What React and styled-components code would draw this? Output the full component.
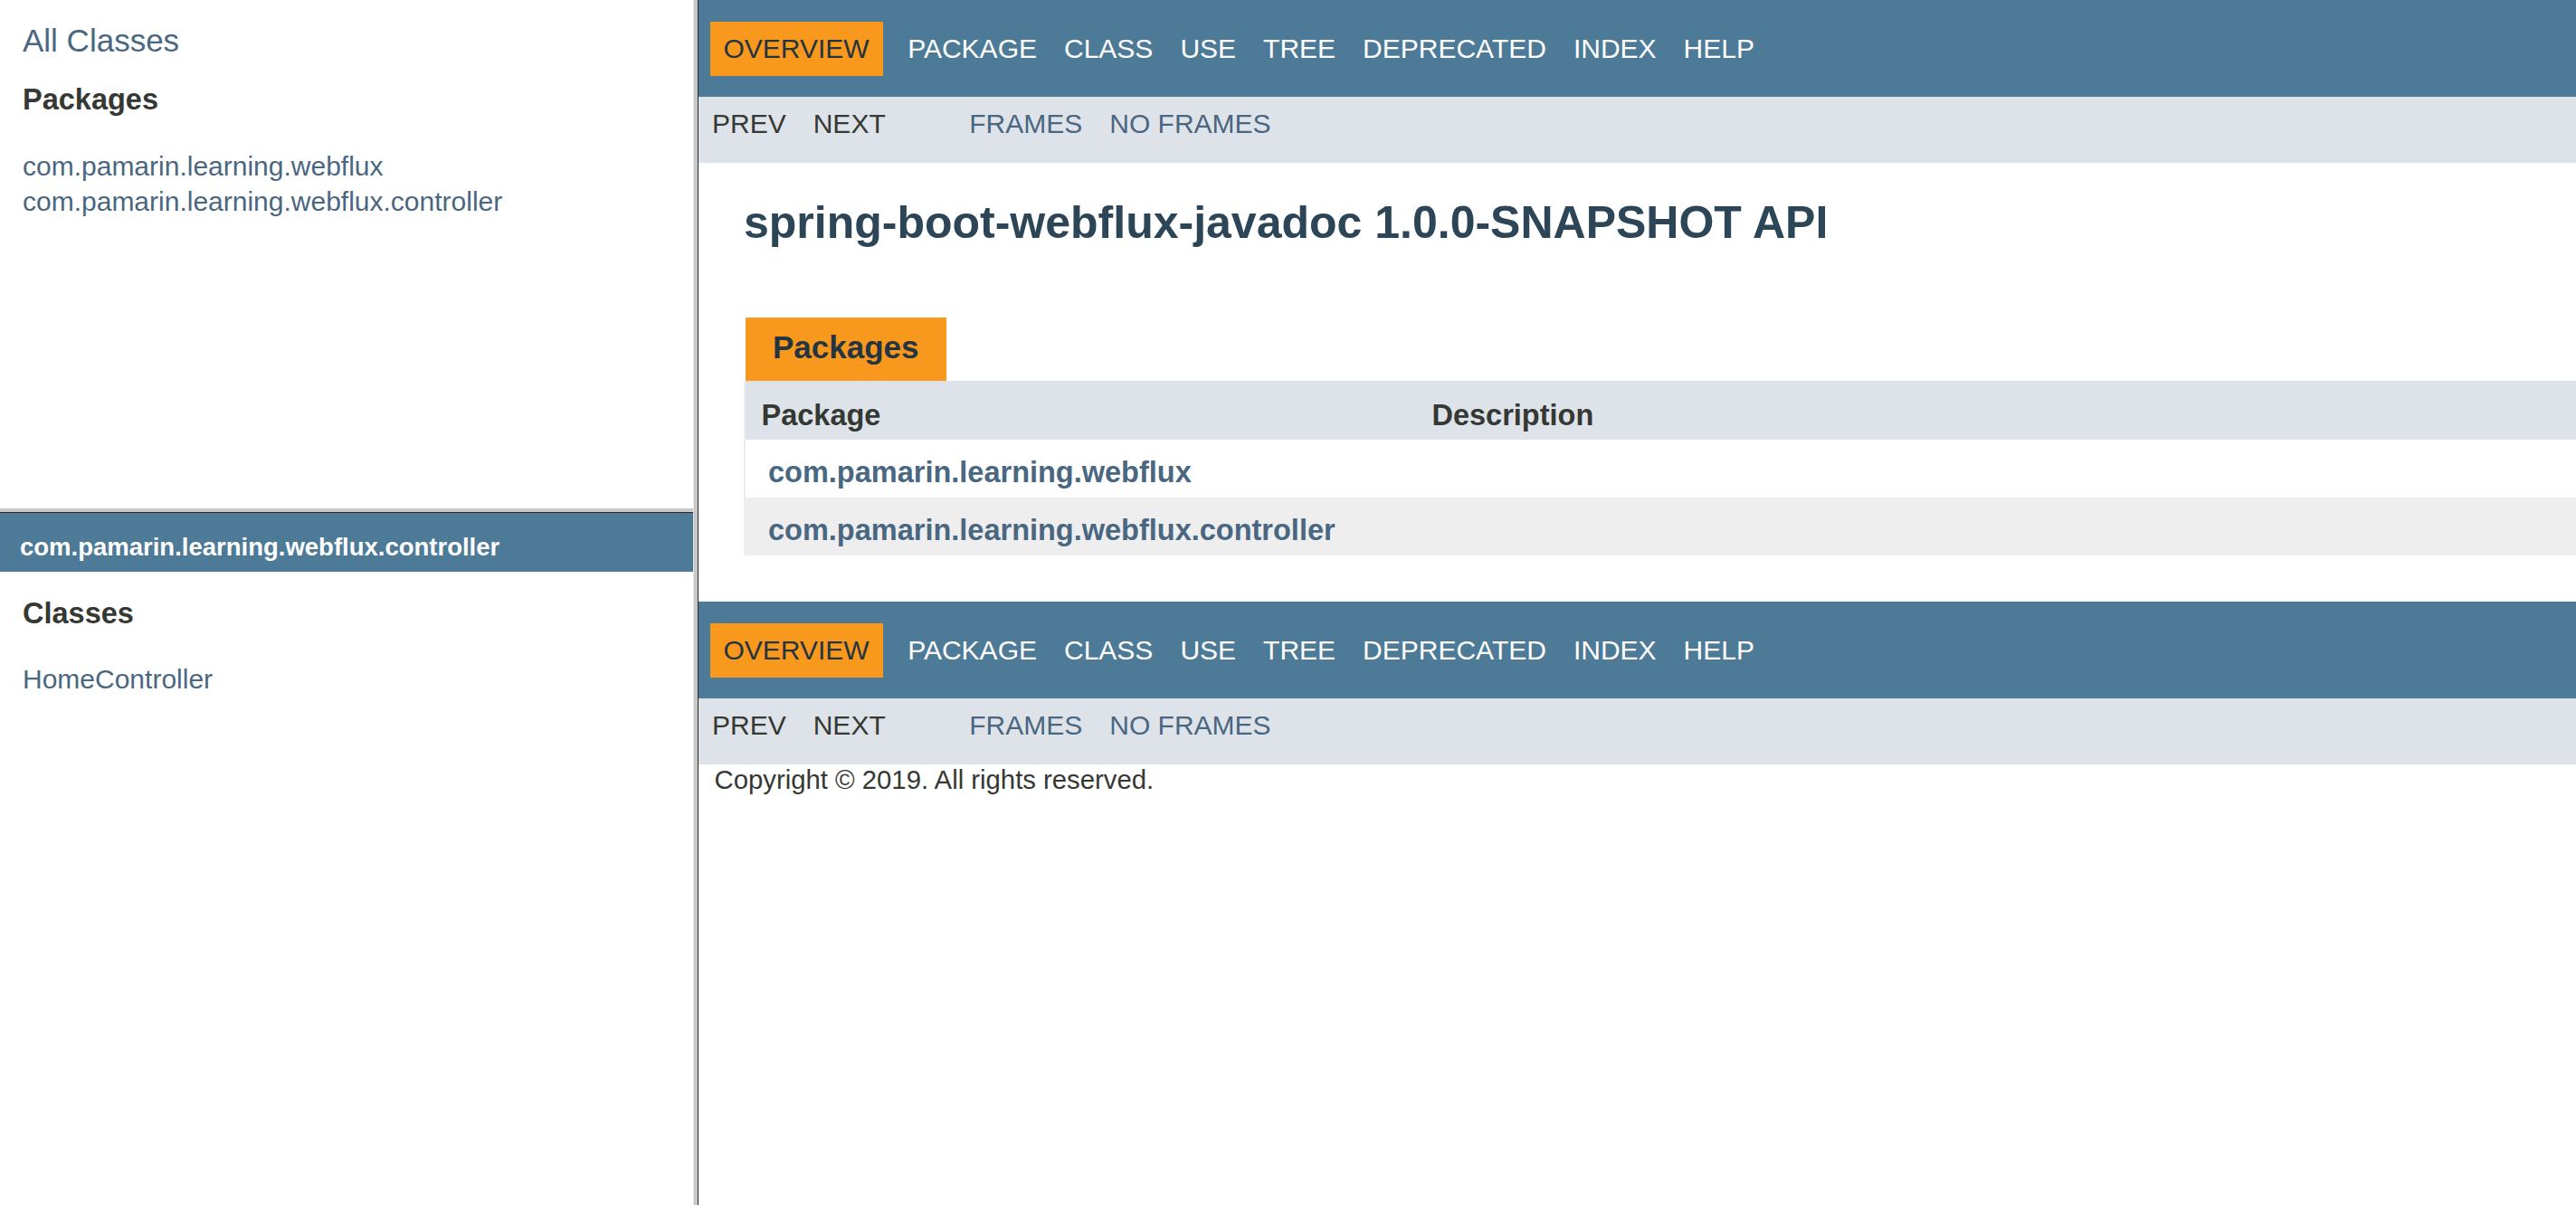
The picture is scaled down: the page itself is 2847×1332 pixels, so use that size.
import React from "react";
import styled, { createGlobalStyle } from "styled-components";

const GlobalStyle = createGlobalStyle`
  html, body, #root { height: 100%; }
  body {
    margin: 0;
    background: #ffffff;
    color: #353833;
    font-family: "Liberation Sans", Arial, Helvetica, sans-serif;
    overflow: hidden;
  }
  * { box-sizing: border-box; }
`;

const FrameSet = styled.div`
  display: grid;
  grid-template-columns: 766px 6px 1fr;
  width: 100%;
  height: 1332px;
`;

const LeftColumn = styled.div`
  display: grid;
  grid-template-rows: 562px 5px 1fr;
  min-height: 0;
`;

const Frame = styled.div`
  background: #ffffff;
  overflow: hidden;
  min-width: 0;
  min-height: 0;
`;

const VDivider = styled.div`
  background: #c8c8c8;
  border-left: 1px solid #e4e4e4;
  border-right: 1px solid #2a2a2a;
`;

const HDivider = styled.div`
  background: #c8c8c8;
  border-bottom: 1px solid #2a2a2a;
`;

const Link = styled.a`
  color: #4a6782;
  text-decoration: none;
  cursor: pointer;
`;

/* ---------- left frames ---------- */
const IndexHeader = styled.div`
  padding: 25px 25px 0;
  font-size: 35px;
  line-height: 40px;
`;

const IndexContainer = styled.div`
  padding: 0 25px;
  font-size: 30px;
`;

const IndexHeading = styled.h2`
  margin: ${(p) => (p.$top ? p.$top : "27px")} 0 25px;
  padding: 0 0 7.5px;
  font-size: 32.5px;
  line-height: 37px;
  font-weight: bold;
  color: #353833;
`;

const IndexList = styled.ul`
  margin: 0;
  padding: 0;
  list-style: none;
`;

const IndexItem = styled.li`
  padding-top: 5px;
  line-height: 34.5px;
  white-space: nowrap;
`;

const PackageBar = styled.h1`
  margin: 0;
  background: #4d7a97;
  padding: 22px 12.5px 11px 22px;
  font-size: 27.5px;
  line-height: 31.6px;
  font-weight: bold;
  white-space: nowrap;

  a { color: #ffffff; }
`;

/* ---------- right frame ---------- */
const TopNav = styled.div`
  display: flex;
  align-items: flex-start;
  background: #4d7a97;
  color: #ffffff;
  height: 107px;
  padding-top: 24px;
  font-size: 30px;
  overflow: hidden;
  margin-top: ${(p) => (p.$bottom ? "26px" : "0")};
`;

const SubNav = styled.div`
  display: flex;
  align-items: flex-start;
  background: #dee3e9;
  height: 73px;
  font-size: 30px;
  overflow: hidden;
`;

const NavList = styled.ul`
  display: flex;
  margin: 0 62.5px 0 0;
  padding: 0;
  list-style: none;
`;

const NavItem = styled.li`
  padding: 12.5px 15px;
  line-height: 34.5px;
  text-transform: uppercase;
  white-space: nowrap;
  color: ${(p) => (p.$active ? "#253441" : "inherit")};
  background: ${(p) => (p.$active ? "#f8981d" : "transparent")};
  margin: ${(p) => (p.$active ? "0 12.5px" : "0")};

  a { color: ${(p) => (p.$light ? "#ffffff" : "#4a6782")}; }
`;

const Header = styled.div`
  padding: 12.5px 50px 0;
`;

const Title = styled.h1`
  margin: 25px 0;
  font-size: 50px;
  line-height: 57.5px;
  font-weight: bold;
  color: #2c4557;
  white-space: nowrap;
`;

const ContentContainer = styled.div`
  padding: 26px 0 25px 50px;
`;

const SummaryTable = styled.table`
  width: 100%;
  border-collapse: separate;
  border-spacing: 0;
  border-left: 2px solid #eeeeee;
`;

const Caption = styled.caption`
  text-align: left;
  padding: 25px 0 0 0;
  caption-side: top;
`;

const CaptionTab = styled.span`
  display: inline-block;
  margin-left: 2px;
  background: #f8981d;
  color: #253441;
  font-size: 35px;
  font-weight: bold;
  line-height: 40px;
  height: 70px;
  padding: 12.5px 30px 17.5px;
  white-space: nowrap;
  vertical-align: top;
`;

const HeadCell = styled.th`
  background: #dee3e9;
  color: #353833;
  text-align: left;
  font-size: 32.5px;
  line-height: 37px;
  font-weight: bold;
  padding: 20px 7.5px 8px 17.5px;
  white-space: nowrap;
  width: ${(p) => (p.$first ? "741px" : "auto")};
`;

const Row = styled.tr`
  background: ${(p) => (p.$alt ? "#eeeeef" : "#ffffff")};
`;

const Cell = styled.td`
  text-align: left;
  vertical-align: top;
  font-size: 32.5px;
  line-height: 37px;
  font-weight: bold;
  padding: 18px 0 9px 25px;
  white-space: nowrap;
`;

const LegalCopy = styled.p`
  margin: 0;
  padding-left: 17.5px;
  font-size: 29.3px;
  line-height: 33px;
  color: #353833;

  small { font-size: inherit; }
`;

const navItems = ["Package", "Class", "Use", "Tree", "Deprecated", "Index", "Help"];
const linked = { Tree: 1, Deprecated: 1, Index: 1, Help: 1 };

function NavBars({ bottom }) {
  return (
    <>
      <TopNav $bottom={bottom}>
        <NavList>
          <NavItem $active>Overview</NavItem>
          {navItems.map((n) => (
            <NavItem key={n} $light>
              {linked[n] ? <Link>{n}</Link> : n}
            </NavItem>
          ))}
        </NavList>
      </TopNav>
      <SubNav>
        <NavList>
          <NavItem>Prev</NavItem>
          <NavItem>Next</NavItem>
        </NavList>
        <NavList>
          <NavItem><Link>Frames</Link></NavItem>
          <NavItem><Link>No&nbsp;Frames</Link></NavItem>
        </NavList>
      </SubNav>
    </>
  );
}

const packages = ["com.pamarin.learning.webflux", "com.pamarin.learning.webflux.controller"];

export default function App() {
  return (
    <>
      <GlobalStyle />
      <FrameSet>
        <LeftColumn>
          <Frame>
            <IndexHeader>
              <Link>All&nbsp;Classes</Link>
            </IndexHeader>
            <IndexContainer>
              <IndexHeading>Packages</IndexHeading>
              <IndexList>
                {packages.map((p) => (
                  <IndexItem key={p}><Link>{p}</Link></IndexItem>
                ))}
              </IndexList>
            </IndexContainer>
          </Frame>
          <HDivider />
          <Frame>
            <PackageBar><Link>com.pamarin.learning.webflux.controller</Link></PackageBar>
            <IndexContainer>
              <IndexHeading $top="28px">Classes</IndexHeading>
              <IndexList>
                <IndexItem><Link>HomeController</Link></IndexItem>
              </IndexList>
            </IndexContainer>
          </Frame>
        </LeftColumn>
        <VDivider />
        <Frame>
          <NavBars />
          <Header>
            <Title>spring-boot-webflux-javadoc 1.0.0-SNAPSHOT API</Title>
          </Header>
          <ContentContainer>
            <SummaryTable>
              <Caption><CaptionTab>Packages</CaptionTab></Caption>
              <thead>
                <tr>
                  <HeadCell $first>Package</HeadCell>
                  <HeadCell>Description</HeadCell>
                </tr>
              </thead>
              <tbody>
                {packages.map((p, i) => (
                  <Row key={p} $alt={i % 2 === 1}>
                    <Cell><Link>{p}</Link></Cell>
                    <Cell>&nbsp;</Cell>
                  </Row>
                ))}
              </tbody>
            </SummaryTable>
          </ContentContainer>
          <NavBars bottom />
          <LegalCopy><small>Copyright &#169; 2019. All rights reserved.</small></LegalCopy>
        </Frame>
      </FrameSet>
    </>
  );
}
